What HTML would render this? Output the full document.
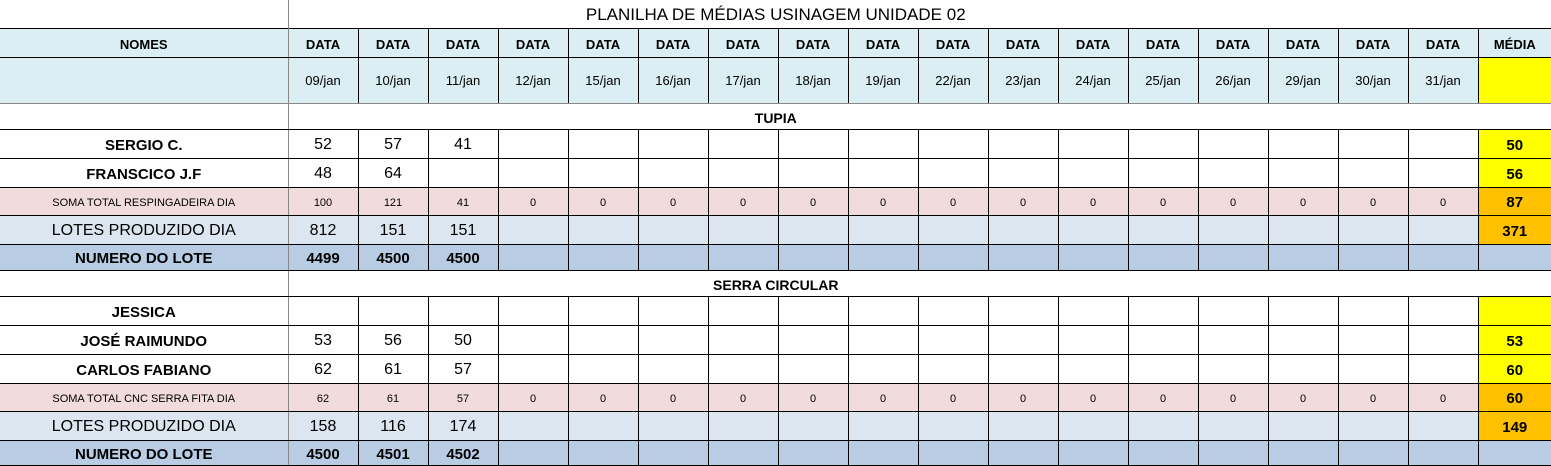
<!DOCTYPE html>
<html><head><meta charset="utf-8"><style>
body{margin:0;width:1551px;height:465px;overflow:hidden;background:#fff;font-family:"Liberation Sans",Arial,sans-serif;}
table{border-collapse:collapse;table-layout:fixed;width:1551px;}
td{padding:3px 0 0 0;text-align:center;vertical-align:middle;border:1px solid #000;color:#000;white-space:nowrap;overflow:hidden;}
tr.t td{border:none;font-size:17px;}
tr.t td.l{border-right:1px solid #888;}
tr.t td.r{border-bottom:1px solid #000;}
tr.h td{background:#DAEEF3;font-weight:bold;font-size:13px;}
tr.d td{background:#DAEEF3;font-size:13px;border-bottom:1px solid #888;padding-top:0;}
tr.s td{border-left:none;border-right:none;border-top:1px solid #888;font-weight:bold;font-size:14px;}
tr.s td.l{border-right:1px solid #888;}
tr.n td{font-size:16px;}
tr.n td.l{font-weight:bold;font-size:15px;}
tr.p td{background:#F2DCDB;font-size:11px;}
tr.o td{background:#DCE6F1;font-size:16px;}
tr.o td.l{font-size:16px;}
tr.u td{background:#B8CCE4;font-weight:bold;font-size:15px;}
td.l{border-left:none;border-right:1px solid #888;}
td.m{border-right:none;}
.y{background:#FFFF00!important;font-weight:bold;font-size:15px!important;}
.or{background:#FFC000!important;font-weight:bold;font-size:15px!important;}
</style></head><body>
<table>
<colgroup><col style="width:288px"><col style="width:70px"><col style="width:70px"><col style="width:70px"><col style="width:70px"><col style="width:70px"><col style="width:70px"><col style="width:70px"><col style="width:70px"><col style="width:70px"><col style="width:70px"><col style="width:70px"><col style="width:70px"><col style="width:70px"><col style="width:70px"><col style="width:70px"><col style="width:70px"><col style="width:70px"><col style="width:73px"></colgroup>
<tr class="t" style="height:28px"><td class="l"></td><td class="r" colspan="18" style="padding-right:288px">PLANILHA DE MÉDIAS USINAGEM UNIDADE 02</td></tr>
<tr class="h" style="height:29px"><td class="l" style="border-right:1px solid #888">NOMES</td><td>DATA</td><td>DATA</td><td>DATA</td><td>DATA</td><td>DATA</td><td>DATA</td><td>DATA</td><td>DATA</td><td>DATA</td><td>DATA</td><td>DATA</td><td>DATA</td><td>DATA</td><td>DATA</td><td>DATA</td><td>DATA</td><td>DATA</td><td class="m">MÉDIA</td></tr>
<tr class="d" style="height:46px"><td class="l"></td><td>09/jan</td><td>10/jan</td><td>11/jan</td><td>12/jan</td><td>15/jan</td><td>16/jan</td><td>17/jan</td><td>18/jan</td><td>19/jan</td><td>22/jan</td><td>23/jan</td><td>24/jan</td><td>25/jan</td><td>26/jan</td><td>29/jan</td><td>30/jan</td><td>31/jan</td><td class="m y"></td></tr>
<tr class="s" style="height:26px"><td class="l"></td><td colspan="18" style="padding-right:288px">TUPIA</td></tr>
<tr class="n" style="height:29px"><td class="l">SERGIO C.</td><td>52</td><td>57</td><td>41</td><td></td><td></td><td></td><td></td><td></td><td></td><td></td><td></td><td></td><td></td><td></td><td></td><td></td><td></td><td class="m y">50</td></tr>
<tr class="n" style="height:29px"><td class="l">FRANSCICO J.F</td><td>48</td><td>64</td><td></td><td></td><td></td><td></td><td></td><td></td><td></td><td></td><td></td><td></td><td></td><td></td><td></td><td></td><td></td><td class="m y">56</td></tr>
<tr class="p" style="height:28px"><td class="l">SOMA TOTAL RESPINGADEIRA DIA</td><td>100</td><td>121</td><td>41</td><td>0</td><td>0</td><td>0</td><td>0</td><td>0</td><td>0</td><td>0</td><td>0</td><td>0</td><td>0</td><td>0</td><td>0</td><td>0</td><td>0</td><td class="m or">87</td></tr>
<tr class="o" style="height:29px"><td class="l">LOTES PRODUZIDO DIA</td><td>812</td><td>151</td><td>151</td><td></td><td></td><td></td><td></td><td></td><td></td><td></td><td></td><td></td><td></td><td></td><td></td><td></td><td></td><td class="m or">371</td></tr>
<tr class="u" style="height:26px"><td class="l">NUMERO DO LOTE</td><td>4499</td><td>4500</td><td>4500</td><td></td><td></td><td></td><td></td><td></td><td></td><td></td><td></td><td></td><td></td><td></td><td></td><td></td><td></td><td class="m"></td></tr>
<tr class="s" style="height:26px"><td class="l" style="border-top:1px solid #000"></td><td colspan="18" style="padding-right:288px;border-top:1px solid #000">SERRA CIRCULAR</td></tr>
<tr class="n" style="height:29px"><td class="l">JESSICA</td><td></td><td></td><td></td><td></td><td></td><td></td><td></td><td></td><td></td><td></td><td></td><td></td><td></td><td></td><td></td><td></td><td></td><td class="m y"></td></tr>
<tr class="n" style="height:29px"><td class="l">JOSÉ RAIMUNDO</td><td>53</td><td>56</td><td>50</td><td></td><td></td><td></td><td></td><td></td><td></td><td></td><td></td><td></td><td></td><td></td><td></td><td></td><td></td><td class="m y">53</td></tr>
<tr class="n" style="height:29px"><td class="l">CARLOS FABIANO</td><td>62</td><td>61</td><td>57</td><td></td><td></td><td></td><td></td><td></td><td></td><td></td><td></td><td></td><td></td><td></td><td></td><td></td><td></td><td class="m y">60</td></tr>
<tr class="p" style="height:28px"><td class="l">SOMA TOTAL CNC SERRA FITA DIA</td><td>62</td><td>61</td><td>57</td><td>0</td><td>0</td><td>0</td><td>0</td><td>0</td><td>0</td><td>0</td><td>0</td><td>0</td><td>0</td><td>0</td><td>0</td><td>0</td><td>0</td><td class="m or">60</td></tr>
<tr class="o" style="height:29px"><td class="l">LOTES PRODUZIDO DIA</td><td>158</td><td>116</td><td>174</td><td></td><td></td><td></td><td></td><td></td><td></td><td></td><td></td><td></td><td></td><td></td><td></td><td></td><td></td><td class="m or">149</td></tr>
<tr class="u" style="height:25px"><td class="l">NUMERO DO LOTE</td><td>4500</td><td>4501</td><td>4502</td><td></td><td></td><td></td><td></td><td></td><td></td><td></td><td></td><td></td><td></td><td></td><td></td><td></td><td></td><td class="m"></td></tr>
</table>
</body></html>
